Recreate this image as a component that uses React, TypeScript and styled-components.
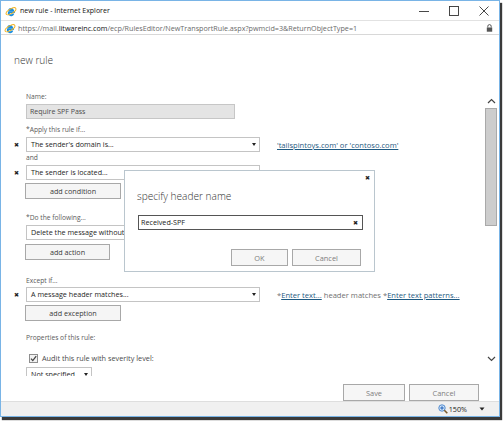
import React from "react";
import styled, { createGlobalStyle } from "styled-components";

const GlobalStyle = createGlobalStyle`
  html, body {
    margin: 0;
    padding: 0;
    background: #fff;
  }
  body {
    width: 504px;
    height: 422px;
    overflow: hidden;
    font-family: "Open Sans", "Noto Sans", sans-serif;
  }
`;

const Screen = styled.div`
  position: relative;
  width: 504px;
  height: 422px;
  background: #fff;
`;

const Frame = styled.div`
  box-sizing: border-box;
  width: 500px;
  height: 417px;
  border: 1px solid #79b4e6;
  box-shadow: 2px 3px 1px #3a3a3a;
  display: flex;
  flex-direction: column;
  background: #fff;
`;

const TitleBar = styled.div`
  height: 19px;
  display: flex;
  align-items: center;
  padding-left: 4px;
`;

const TitleText = styled.span`
  margin-left: 3px;
  font-size: 7px;
  color: #111;
  flex: 1;
`;

const WinButton = styled.div`
  width: 30px;
  height: 19px;
  display: flex;
  align-items: center;
  justify-content: center;
`;

const AddressBar = styled.div`
  box-sizing: border-box;
  height: 15px;
  border-top: 1px solid #e2e2e2;
  border-bottom: 1px solid #d8d8d8;
  display: flex;
  align-items: center;
  padding-left: 3px;
  padding-right: 6px;
`;

const Url = styled.span`
  margin-left: 2px;
  font-size: 7.2px;
  color: #6a6a6a;
  flex: 1;
  white-space: nowrap;
`;

const Host = styled.span`
  color: #111;
`;

const Main = styled.div`
  flex: 1;
  display: flex;
  flex-direction: column;
  min-height: 0;
`;

const Header = styled.div`
  height: 57px;
  box-sizing: border-box;
  padding: 18px 0 0 13px;
`;

const Heading = styled.h1`
  margin: 0;
  font-size: 10.1px;
  line-height: 14px;
  font-weight: 300;
  color: #333;
`;

const Body = styled.div`
  height: 284px;
  display: flex;
`;

const FormArea = styled.div`
  flex: 1;
  overflow: hidden;
  padding-left: 25px;
`;

const Label = styled.div<{ $top: number }>`
  margin-top: ${(p) => p.$top}px;
  font-size: 6.7px;
  line-height: 10px;
  height: 10px;
  color: #5a5a5a;
  white-space: nowrap;
`;

const NameInput = styled.div`
  box-sizing: border-box;
  margin-top: 2px;
  width: 209px;
  height: 15px;
  background: #e4e4e4;
  border: 1px solid #c6c6c6;
  font-size: 7px;
  line-height: 13px;
  padding-left: 3px;
  color: #4a4a4a;
`;

const Row = styled.div<{ $top: number }>`
  margin-top: ${(p) => p.$top}px;
  margin-left: -12px;
  display: flex;
  align-items: center;
  height: 15px;
`;

const Remove = styled.span`
  width: 12px;
  font-family: "DejaVu Sans", sans-serif;
  font-size: 6px;
  color: #222;
`;

const Select = styled.div<{ $width: number }>`
  position: relative;
  box-sizing: border-box;
  width: ${(p) => p.$width}px;
  height: 15px;
  border: 1px solid #c4c4c4;
  background: #fff;
  font-size: 7.2px;
  line-height: 13px;
  padding-left: 4px;
  color: #262626;
  white-space: nowrap;
  overflow: hidden;
  flex-shrink: 0;

  &::after {
    content: "";
    position: absolute;
    right: 3px;
    top: 5px;
    border-left: 2.5px solid transparent;
    border-right: 2.5px solid transparent;
    border-top: 3px solid #222;
  }
`;

const Detail = styled.span`
  margin-left: 17px;
  font-size: 7.6px;
  color: #707070;
  white-space: nowrap;
`;

const Link = styled.a`
  color: #1f5a82;
  text-decoration: underline;
`;

const Button = styled.button<{ $width: number; $top?: number }>`
  display: block;
  box-sizing: border-box;
  margin: ${(p) => p.$top ?? 0}px 0 0 -1px;
  width: ${(p) => p.$width}px;
  height: 16px;
  padding: 0;
  background: #f5f5f5;
  border: 1px solid #a8a8a8;
  font-family: inherit;
  font-size: 7.2px;
  color: #3a3a3a;
`;

const CheckRow = styled.div`
  margin-top: 10px;
  height: 10px;
  display: flex;
  align-items: center;
  padding-left: 3px;
  font-size: 7.3px;
  color: #4a4a4a;
`;

const Check = styled.span`
  box-sizing: border-box;
  width: 9px;
  height: 9px;
  border: 1px solid #8e8e8e;
  background: #f2f2f2;
  margin-right: 4px;
  display: flex;
  align-items: center;
  justify-content: center;
`;

const Scrollbar = styled.div`
  width: 15px;
  display: flex;
  flex-direction: column;
  align-items: center;
  padding: 4px 1px 12px 0;
  box-sizing: border-box;
`;

const Arrow = styled.div`
  height: 10px;
  display: flex;
  align-items: center;
  justify-content: center;
`;

const Track = styled.div`
  flex: 1;
  width: 100%;
  display: flex;
  flex-direction: column;
  align-items: center;
`;

const Thumb = styled.div`
  box-sizing: border-box;
  margin-top: 2px;
  width: 12px;
  height: 118px;
  background: #cdcdcd;
  border: 1px solid #a9a9a9;
`;

const Footer = styled.div`
  height: 25px;
  display: flex;
  align-items: flex-start;
  justify-content: flex-end;
  gap: 4px;
  padding: 8px 20px 0 0;
  box-sizing: border-box;
`;

const FooterButton = styled(Button)`
  height: 17px;
  margin: 0;
  color: #808080;
  background: #f6f6f6;
  font-size: 7.4px;
`;

const StatusBar = styled.div`
  height: 15px;
  box-sizing: border-box;
  background: #f0f0f0;
  border-top: 1px solid #dedede;
  display: flex;
  align-items: center;
  justify-content: flex-end;
  padding-right: 14px;
  font-size: 7.2px;
  color: #222;
`;

const Zoom = styled.span`
  margin-left: 1px;
  margin-right: 12px;
`;

const Dialog = styled.div`
  position: absolute;
  left: 124px;
  top: 170px;
  width: 251px;
  height: 102px;
  box-sizing: border-box;
  background: #fff;
  border: 1px solid #bac6ce;
  padding: 18px 13px 0 12px;
`;

const DialogClose = styled.span`
  position: absolute;
  top: 3px;
  right: 4px;
  font-family: "DejaVu Sans", sans-serif;
  font-size: 6px;
  color: #222;
`;

const DialogTitle = styled.div`
  font-size: 10.1px;
  line-height: 14px;
  font-weight: 300;
  color: #333;
`;

const DialogInput = styled.div`
  position: relative;
  box-sizing: border-box;
  margin: 12px 0 0 1px;
  width: 225px;
  height: 15px;
  border: 1px solid #555;
  font-size: 7.2px;
  line-height: 13px;
  padding-left: 2px;
  color: #222;
`;

const ClearX = styled.span`
  position: absolute;
  right: 4px;
  top: 0;
  font-family: "DejaVu Sans", sans-serif;
  font-size: 6px;
  color: #222;
`;

const DialogButtons = styled.div`
  margin-top: 19px;
  display: flex;
  justify-content: flex-end;
  gap: 4px;
`;

const IeLogo = () => (
  <svg width="12" height="12" viewBox="0 0 16 16">
    <path d="M13.2 9.4 H5.2 A3 3 0 0 0 11.3 11.4" fill="none" stroke="#1b8ede" strokeWidth="2.4" />
    <path d="M5.2 7.2 H10.8 A2.9 2.9 0 0 0 5.2 7.2" fill="none" stroke="#1b8ede" strokeWidth="2.4" />
    <ellipse cx="8" cy="8.4" rx="7.4" ry="3" transform="rotate(-32 8 8.4)" fill="none" stroke="#f2b21c" strokeWidth="1.3" />
  </svg>
);

const Lock = () => (
  <svg width="7" height="8" viewBox="0 0 7 8">
    <path d="M1.8 3.5 V2.3 A1.7 1.7 0 0 1 5.2 2.3 V3.5" fill="none" stroke="#555" strokeWidth="1" />
    <rect x="0.8" y="3.5" width="5.4" height="4.2" fill="#555" />
  </svg>
);

const Chevron = ({ up }: { up?: boolean }) => (
  <svg width="9" height="6" viewBox="0 0 9 6">
    <polyline points={up ? "1,5 4.5,1.5 8,5" : "1,1 4.5,4.5 8,1"} fill="none" stroke="#444" strokeWidth="1.2" />
  </svg>
);

const CheckMark = () => (
  <svg width="7" height="7" viewBox="0 0 7 7">
    <polyline points="1,3.6 2.8,5.6 6.2,1.2" fill="none" stroke="#444" strokeWidth="1.3" />
  </svg>
);

const Magnifier = () => (
  <svg width="10" height="10" viewBox="0 0 10 10">
    <circle cx="4" cy="4" r="3.2" fill="#d8e9fb" stroke="#3f7fc8" strokeWidth="0.9" />
    <path d="M4 2.2 V5.8 M2.2 4 H5.8" stroke="#1d5fb8" strokeWidth="1" />
    <path d="M6.3 6.3 L9.3 9.3" stroke="#7a5a2a" strokeWidth="1.6" />
  </svg>
);

const Caret = () => (
  <svg width="6" height="4" viewBox="0 0 6 4">
    <polygon points="0.5,0.5 5.5,0.5 3,3.5" fill="#222" />
  </svg>
);

export default function App() {
  return (
    <Screen>
      <GlobalStyle />
      <Frame>
        <TitleBar>
          <IeLogo />
          <TitleText>new rule - Internet Explorer</TitleText>
          <WinButton>
            <svg width="10" height="10" viewBox="0 0 10 10">
              <path d="M0 5.5 H10" stroke="#333" strokeWidth="0.9" />
            </svg>
          </WinButton>
          <WinButton>
            <svg width="10" height="10" viewBox="0 0 10 10">
              <rect x="0.5" y="0.5" width="9" height="9" fill="none" stroke="#333" strokeWidth="0.9" />
            </svg>
          </WinButton>
          <WinButton>
            <svg width="10" height="10" viewBox="0 0 10 10">
              <path d="M0.5 0.5 L9.5 9.5 M9.5 0.5 L0.5 9.5" stroke="#333" strokeWidth="0.9" />
            </svg>
          </WinButton>
        </TitleBar>

        <AddressBar>
          <IeLogo />
          <Url>
            https://mail.<Host>litwareinc.com</Host>/ecp/RulesEditor/NewTransportRule.aspx?pwmcid=3&amp;ReturnObjectType=1
          </Url>
          <Lock />
        </AddressBar>

        <Main>
          <Header>
            <Heading>new rule</Heading>
          </Header>

          <Body>
            <FormArea>
              <Label $top={0}>Name:</Label>
              <NameInput>Require SPF Pass</NameInput>

              <Label $top={6}>*Apply this rule if...</Label>
              <Row $top={2}>
                <Remove>✖</Remove>
                <Select $width={234}>The sender's domain is...</Select>
                <Detail>
                  <Link>'tailspintoys.com' or 'contoso.com'</Link>
                </Detail>
              </Row>
              <Label $top={1}>and</Label>
              <Row $top={2}>
                <Remove>✖</Remove>
                <Select $width={234}>The sender is located...</Select>
                <Detail>
                  <Link>'NotInOrganization'</Link>
                </Detail>
              </Row>
              <Button $width={96} $top={3}>
                add condition
              </Button>

              <Label $top={14}>*Do the following...</Label>
              <Row $top={2}>
                <Remove />
                <Select $width={234}>Delete the message without notifying anyone</Select>
              </Row>
              <Button $width={85} $top={4}>
                add action
              </Button>

              <Label $top={16}>Except if...</Label>
              <Row $top={1}>
                <Remove>✖</Remove>
                <Select $width={234}>A message header matches...</Select>
                <Detail>
                  *<Link>Enter text...</Link> header matches *<Link>Enter text patterns...</Link>
                </Detail>
              </Row>
              <Button $width={96} $top={3}>
                add exception
              </Button>

              <Label $top={12}>Properties of this rule:</Label>
              <CheckRow>
                <Check>
                  <CheckMark />
                </Check>
                Audit this rule with severity level:
              </CheckRow>
              <Row $top={4}>
                <Remove />
                <Select $width={66}>Not specified</Select>
              </Row>
            </FormArea>

            <Scrollbar>
              <Arrow>
                <Chevron up />
              </Arrow>
              <Track>
                <Thumb />
              </Track>
              <Arrow>
                <Chevron />
              </Arrow>
            </Scrollbar>
          </Body>

          <Footer>
            <FooterButton $width={62}>Save</FooterButton>
            <FooterButton $width={70}>Cancel</FooterButton>
          </Footer>
        </Main>

        <StatusBar>
          <Magnifier />
          <Zoom>150%</Zoom>
          <Caret />
        </StatusBar>
      </Frame>

      <Dialog>
        <DialogClose>✖</DialogClose>
        <DialogTitle>specify header name</DialogTitle>
        <DialogInput>
          Received-SPF
          <ClearX>✖</ClearX>
        </DialogInput>
        <DialogButtons>
          <FooterButton $width={57}>OK</FooterButton>
          <FooterButton $width={69}>Cancel</FooterButton>
        </DialogButtons>
      </Dialog>
    </Screen>
  );
}
